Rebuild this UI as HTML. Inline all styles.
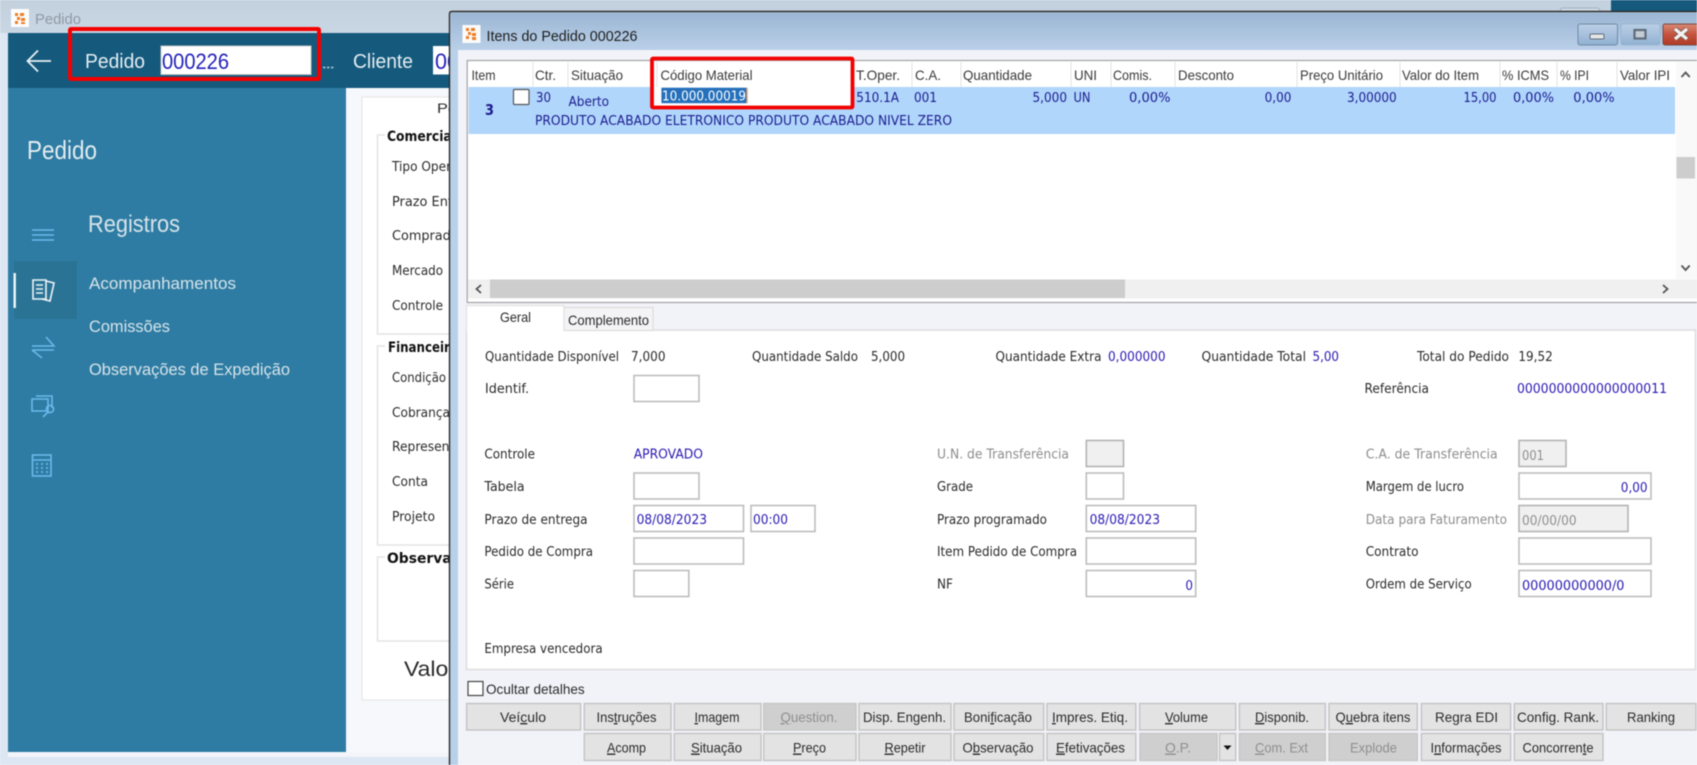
<!DOCTYPE html>
<html lang="pt-BR">
<head>
<meta charset="utf-8">
<title>Itens do Pedido 000226</title>
<style>
html,body{margin:0;padding:0;width:1697px;height:765px;overflow:hidden;background:#f3f5fa}
svg{display:block;filter:blur(.45px)}
text{font-family:"Liberation Sans",Arial,sans-serif;font-size:14px;fill:#2b2b2b}
.t text,text.n{font-family:"DejaVu Sans",sans-serif;font-size:13px}
.b{fill:#2a1ab5}
text.n{fill:#1c1c8e}
.g{fill:#8d8d8d}
.d{fill:#8f8f8f}
.h{fill:#3a3a3a}
.lg{font-family:"DejaVu Sans",sans-serif;font-weight:bold;font-size:14px;fill:#111}
.side{fill:#d6e3ea}
.inp{fill:#fff;stroke:#bdbdbd;stroke-width:1.6}
.dis{fill:#f0f0f0;stroke:#b4b4b4;stroke-width:1.6}
.btn{fill:#e3e3e3;stroke:#c4c4c4;stroke-width:1.4}
.btd{fill:#cfcfcf;stroke:#c6c6c6;stroke-width:1.4}
.ic{fill:none;stroke:#6ab8ea;stroke-width:1.6}
</style>
</head>
<body>
<svg xmlns="http://www.w3.org/2000/svg" width="1697" height="765" viewBox="0 0 1697 765">
<defs>
<linearGradient id="tb" x1="0" y1="0" x2="0" y2="1"><stop offset="0" stop-color="#9bb6d3"/><stop offset="1" stop-color="#bad0e9"/></linearGradient>
<linearGradient id="bt" x1="0" y1="0" x2="0" y2="1"><stop offset="0" stop-color="#b9cfe6"/><stop offset=".5" stop-color="#a8c1dd"/><stop offset="1" stop-color="#8fb0d2"/></linearGradient>
<linearGradient id="cl" x1="0" y1="0" x2="0" y2="1"><stop offset="0" stop-color="#d98a76"/><stop offset=".5" stop-color="#c4533e"/><stop offset="1" stop-color="#b03a26"/></linearGradient>
<linearGradient id="tl" x1="0" y1="0" x2="0" y2="1"><stop offset="0" stop-color="#c3d1de"/><stop offset="1" stop-color="#c9d6e3"/></linearGradient>
</defs>

<!-- background window -->
<rect x="0" y="0" width="1697" height="765" fill="#dce7f3"/>
<rect x="0" y="0" width="1697" height="33" fill="url(#tl)"/>
<rect x="11" y="9" width="18" height="18" fill="#fdfdfd"/>
<g fill="#ef7d22"><rect x="15" y="13" width="3" height="3"/><rect x="20" y="13" width="4" height="3"/><rect x="17" y="17" width="3" height="3"/><rect x="21" y="18" width="4" height="3"/><rect x="15" y="21" width="3" height="3"/><rect x="21" y="22" width="4" height="2"/></g>
<text x="35" y="24" style="font-size:15px;fill:#8e9aa6" textLength="46" lengthAdjust="spacingAndGlyphs">Pedido</text>

<rect x="8" y="33" width="442" height="55" fill="#155a7d"/>
<path d="M51 61H28M38 50.5L27.5 61 38 71.5" fill="none" stroke="#e8eff3" stroke-width="1.8"/>
<text x="85" y="68" style="font-size:20px;fill:#e4edf2" textLength="60" lengthAdjust="spacingAndGlyphs">Pedido</text>
<rect x="161" y="46" width="150" height="28.5" fill="#fff" stroke="#c9c9c9" stroke-width="1"/>
<text x="162" y="69" style="font-size:22px;fill:#2421b8" textLength="67" lengthAdjust="spacingAndGlyphs">000226</text>
<path d="M323 67.5H334" stroke="#b8cfdc" stroke-width="1.6" stroke-dasharray="2.4 1.6"/>
<text x="353" y="68" style="font-size:20px;fill:#e4edf2" textLength="60" lengthAdjust="spacingAndGlyphs">Cliente</text>
<rect x="433" y="46" width="20" height="28.5" fill="#fff"/>
<text x="435" y="69" style="font-size:22px;fill:#2421b8" textLength="24" lengthAdjust="spacingAndGlyphs">00</text>
<rect x="70" y="29" width="249" height="50" rx="1" fill="none" stroke="#f40000" stroke-width="4"/>

<!-- sidebar -->
<rect x="8" y="88" width="338" height="664" fill="#2e7ca3"/>
<text x="27" y="159" class="side" style="font-size:26px;fill:#e2ecf1" textLength="70" lengthAdjust="spacingAndGlyphs">Pedido</text>
<text x="88" y="232" class="side" style="font-size:24px" textLength="92" lengthAdjust="spacingAndGlyphs">Registros</text>
<text x="89" y="289" class="side" style="font-size:17px" textLength="147" lengthAdjust="spacingAndGlyphs">Acompanhamentos</text>
<text x="89" y="332" class="side" style="font-size:17px" textLength="81" lengthAdjust="spacingAndGlyphs">Comissões</text>
<text x="89" y="375" class="side" style="font-size:17px" textLength="201" lengthAdjust="spacingAndGlyphs">Observações de Expedição</text>
<path class="ic" d="M32 230H54M32 235H54M32 240H54"/>
<rect x="14" y="261" width="63" height="58" fill="#2a7395"/>
<rect x="13.5" y="273" width="2.4" height="35" fill="#f2f6f8"/>
<g fill="none" stroke="#eef3f6" stroke-width="1.6"><path d="M33 280H46V299H33ZM36 285H43M36 289H43M36 293H43"/><path d="M46 281L54 283 50 301 42 299" /></g>
<path class="ic" d="M32 346H54L46 337M32 350H54M32 350L42 358"/>
<path class="ic" d="M36 396H52V408M32 399H48V411H32ZM43 417L49 411"/>
<circle class="ic" cx="50" cy="409" r="3.6"/>
<rect class="ic" x="32.5" y="455" width="18.5" height="21"/>
<path class="ic" d="M33 460H51" />
<g fill="#62b0e2"><rect x="36" y="463" width="2" height="2"/><rect x="41" y="463" width="2" height="2"/><rect x="46" y="463" width="2" height="2"/><rect x="36" y="467" width="2" height="2"/><rect x="41" y="467" width="2" height="2"/><rect x="46" y="467" width="2" height="2"/><rect x="36" y="471" width="2" height="2"/><rect x="41" y="471" width="2" height="2"/><rect x="46" y="471" width="2" height="2"/></g>

<!-- content behind -->
<rect x="346" y="88" width="104" height="664" fill="#f7f8fc"/>
<rect x="8" y="752" width="442" height="5" fill="#f3f5fa"/>
<rect x="362" y="97" width="100" height="603" fill="#fff" stroke="#e4e4e4" stroke-width="1"/>
<text x="437" y="113" textLength="20" lengthAdjust="spacingAndGlyphs">Pe</text>
<g fill="none" stroke="#e5e5e5" stroke-width="1.6">
<path d="M385 135H377.5V334H460M385 346H377.5V545H460M385 557H377.5V641H460"/>
</g>
<text x="387" y="141" class="lg" textLength="69" lengthAdjust="spacingAndGlyphs">Comercial</text>
<text x="388" y="352" class="lg" textLength="70" lengthAdjust="spacingAndGlyphs">Financeiro</text>
<text x="387" y="563" class="lg" textLength="100" lengthAdjust="spacingAndGlyphs">Observações</text>
<g class="t">
<text x="392" y="171" textLength="88" lengthAdjust="spacingAndGlyphs">Tipo Operação</text>
<text x="392" y="206" textLength="90" lengthAdjust="spacingAndGlyphs">Prazo Entrega</text>
<text x="392" y="240" textLength="72" lengthAdjust="spacingAndGlyphs">Comprador</text>
<text x="392" y="275" textLength="51" lengthAdjust="spacingAndGlyphs">Mercado</text>
<text x="392" y="310" textLength="51" lengthAdjust="spacingAndGlyphs">Controle</text>
<text x="392" y="382" textLength="54" lengthAdjust="spacingAndGlyphs">Condição</text>
<text x="392" y="417" textLength="58" lengthAdjust="spacingAndGlyphs">Cobrança</text>
<text x="392" y="451" textLength="90" lengthAdjust="spacingAndGlyphs">Representante</text>
<text x="392" y="486" textLength="36" lengthAdjust="spacingAndGlyphs">Conta</text>
<text x="392" y="521" textLength="43" lengthAdjust="spacingAndGlyphs">Projeto</text>
</g>
<text x="404" y="676" style="font-size:21px" textLength="52" lengthAdjust="spacingAndGlyphs">Valor</text>

<!-- far background top-right -->
<rect x="1611" y="0" width="86" height="12" fill="#155a7d"/>
<rect x="1560.5" y="8" width="39" height="6" rx="2" fill="#d0dce7" stroke="#9fb0c0"/>

<!-- DIALOG -->
<rect x="449" y="11" width="1248" height="754" fill="#b9d0e9"/>
<path d="M449.5 765V14Q449.5 11.5 452 11.5H1697" fill="none" stroke="#2a2a2a" stroke-width="1.4"/>
<rect x="451" y="13" width="1246" height="37" fill="url(#tb)"/>
<rect x="458" y="50" width="1239" height="715" fill="#f2f3f9"/>
<rect x="462.5" y="25" width="18" height="18" fill="#fbfbfb"/>
<g fill="#ef7d22"><rect x="466" y="28" width="3" height="3"/><rect x="471" y="28" width="4" height="3"/><rect x="468" y="32" width="3" height="3"/><rect x="472" y="33" width="4" height="3"/><rect x="466" y="36" width="3" height="3"/><rect x="472" y="37" width="4" height="3"/></g>
<text x="486.5" y="41" style="font-size:14.5px;fill:#1e1e1e" textLength="151" lengthAdjust="spacingAndGlyphs">Itens do Pedido 000226</text>

<!-- caption buttons -->
<rect x="1578" y="24" width="39.5" height="21" rx="2" fill="url(#bt)" stroke="#6f8aa6"/>
<rect x="1590" y="34" width="14" height="5" rx="1" fill="#e6e6e6" stroke="#5e6c7b"/>
<rect x="1621" y="24" width="39" height="21" rx="2" fill="url(#bt)" stroke="#9db5cf"/>
<rect x="1634.5" y="30" width="11" height="8.5" fill="#c4ccd4" stroke="#5e6c7b" stroke-width="2.2"/>
<rect x="1663" y="24" width="36" height="21" rx="2" fill="url(#cl)" stroke="#7b4a42"/>
<path d="M1675 29L1687 39M1687 29L1675 39" stroke="#6d5a55" stroke-width="5"/>
<path d="M1675 29L1687 39M1687 29L1675 39" stroke="#f4f1ef" stroke-width="3.4"/>

<!-- list -->
<rect x="467.2" y="60.5" width="1231" height="242" fill="#fff" stroke="#a3a3a3" stroke-width="1.2"/>
<rect x="468.5" y="87" width="1206.5" height="47" fill="#b0d6fc"/>
<rect x="1676" y="62" width="21" height="217" fill="#f9f9f9"/>
<rect x="1676.5" y="157" width="18.5" height="21.5" fill="#cdcdcd"/>
<path d="M1681.5 77L1685.6 72.5 1689.7 77M1681.5 265.5L1685.6 270 1689.7 265.5" fill="none" stroke="#555" stroke-width="1.8"/>
<rect x="468" y="279.5" width="1229" height="19" fill="#f0f0f0"/>
<rect x="490" y="279.5" width="635" height="18.5" fill="#cdcdcd"/>
<path d="M481 285L476.5 289 481 293M1663 285L1667.5 289 1663 293" fill="none" stroke="#555" stroke-width="1.8"/>
<path fill="none" stroke="#e6e6e6" stroke-width="1.2" d="M533 62V87M568 62V87M657 62V87M854 62V87M912 62V87M961 62V87M1071 62V87M1111 62V87M1175 62V87M1297 62V87M1400 62V87M1500 62V87M1557 62V87M1617 62V87"/>
<g>
<text class="h" x="471.5" y="80" textLength="24" lengthAdjust="spacingAndGlyphs">Item</text>
<text class="h" x="535" y="80" textLength="21" lengthAdjust="spacingAndGlyphs">Ctr.</text>
<text class="h" x="571" y="80" textLength="52" lengthAdjust="spacingAndGlyphs">Situação</text>
<text class="h" x="660.5" y="80" textLength="92" lengthAdjust="spacingAndGlyphs">Código Material</text>
<text class="h" x="856" y="80" textLength="44" lengthAdjust="spacingAndGlyphs">T.Oper.</text>
<text class="h" x="915" y="80" textLength="26" lengthAdjust="spacingAndGlyphs">C.A.</text>
<text class="h" x="963" y="80" textLength="69" lengthAdjust="spacingAndGlyphs">Quantidade</text>
<text class="h" x="1074" y="80" textLength="23" lengthAdjust="spacingAndGlyphs">UNI</text>
<text class="h" x="1113" y="80" textLength="39" lengthAdjust="spacingAndGlyphs">Comis.</text>
<text class="h" x="1178" y="80" textLength="56" lengthAdjust="spacingAndGlyphs">Desconto</text>
<text class="h" x="1300" y="80" textLength="83" lengthAdjust="spacingAndGlyphs">Preço Unitário</text>
<text class="h" x="1402" y="80" textLength="77" lengthAdjust="spacingAndGlyphs">Valor do Item</text>
<text class="h" x="1502" y="80" textLength="47" lengthAdjust="spacingAndGlyphs">% ICMS</text>
<text class="h" x="1560" y="80" textLength="29" lengthAdjust="spacingAndGlyphs">% IPI</text>
<text class="h" x="1620" y="80" textLength="50" lengthAdjust="spacingAndGlyphs">Valor IPI</text>
</g>
<text class="n" x="485" y="115" style="font-size:15px;font-weight:bold" textLength="9" lengthAdjust="spacingAndGlyphs">3</text>
<rect x="513.5" y="89.5" width="15.5" height="15" rx="1" fill="#fff" stroke="#555" stroke-width="1.2"/>
<text class="n" x="536" y="102" textLength="15" lengthAdjust="spacingAndGlyphs">30</text>
<text class="n" x="568.5" y="106" textLength="40.5" lengthAdjust="spacingAndGlyphs">Aberto</text>
<rect x="652" y="87" width="200" height="20" fill="#fff"/>
<rect x="661.4" y="87.7" width="85" height="15.5" fill="#2470bb"/>
<rect x="746.5" y="87.7" width="1.2" height="15.5" fill="#ee9a55"/>
<text x="662" y="100.5" style="font-family:'DejaVu Sans',sans-serif;font-size:13px;fill:#fff" textLength="84" lengthAdjust="spacingAndGlyphs">10.000.00019</text>
<text class="n" x="856.3" y="102" textLength="42.7" lengthAdjust="spacingAndGlyphs">510.1A</text>
<text class="n" x="914" y="102" textLength="23" lengthAdjust="spacingAndGlyphs">001</text>
<text class="n" x="1032.5" y="102" textLength="34.5" lengthAdjust="spacingAndGlyphs">5,000</text>
<text class="n" x="1073.5" y="102" textLength="17" lengthAdjust="spacingAndGlyphs">UN</text>
<text class="n" x="1129" y="102" textLength="41.5" lengthAdjust="spacingAndGlyphs">0,00%</text>
<text class="n" x="1264.6" y="102" textLength="26.8" lengthAdjust="spacingAndGlyphs">0,00</text>
<text class="n" x="1347" y="102" textLength="49.7" lengthAdjust="spacingAndGlyphs">3,00000</text>
<text class="n" x="1463.5" y="102" textLength="33" lengthAdjust="spacingAndGlyphs">15,00</text>
<text class="n" x="1513" y="102" textLength="41" lengthAdjust="spacingAndGlyphs">0,00%</text>
<text class="n" x="1573.3" y="102" textLength="41.3" lengthAdjust="spacingAndGlyphs">0,00%</text>
<text class="n" x="535" y="125" textLength="417" lengthAdjust="spacingAndGlyphs">PRODUTO ACABADO ELETRONICO PRODUTO ACABADO NIVEL ZERO</text>
<rect x="652" y="58.5" width="200.5" height="49" rx="1" fill="none" stroke="#f40000" stroke-width="3.8"/>

<!-- tabs + panel -->
<rect x="466.5" y="330" width="1229" height="339.5" fill="#fff" stroke="#dedede" stroke-width="1.6"/>
<rect x="564" y="307.5" width="89" height="23" fill="#f4f4f6" stroke="#dcdcdc" stroke-width="1.2"/>
<rect x="466.5" y="305" width="97.5" height="27" fill="#fff"/>
<path d="M466.5 331V305.5H564V331" fill="none" stroke="#e2e2e2" stroke-width="1.2"/>
<text x="500" y="322" textLength="31" lengthAdjust="spacingAndGlyphs">Geral</text>
<text x="568" y="325" textLength="81" lengthAdjust="spacingAndGlyphs">Complemento</text>

<g class="t">
<!-- info row -->
<text x="485" y="361" textLength="134" lengthAdjust="spacingAndGlyphs">Quantidade Disponível</text>
<text x="631" y="361" textLength="34.5" lengthAdjust="spacingAndGlyphs">7,000</text>
<text x="752" y="361" textLength="106" lengthAdjust="spacingAndGlyphs">Quantidade Saldo</text>
<text x="871" y="361" textLength="34" lengthAdjust="spacingAndGlyphs">5,000</text>
<text x="995.5" y="361" textLength="106" lengthAdjust="spacingAndGlyphs">Quantidade Extra</text>
<text class="b" x="1108" y="361" textLength="57.5" lengthAdjust="spacingAndGlyphs">0,000000</text>
<text x="1201.5" y="361" textLength="104.5" lengthAdjust="spacingAndGlyphs">Quantidade Total</text>
<text class="b" x="1312.5" y="361" textLength="26.5" lengthAdjust="spacingAndGlyphs">5,00</text>
<text x="1417" y="361" textLength="92" lengthAdjust="spacingAndGlyphs">Total do Pedido</text>
<text x="1518.4" y="361" textLength="34.3" lengthAdjust="spacingAndGlyphs">19,52</text>

<text x="485" y="393" textLength="44" lengthAdjust="spacingAndGlyphs">Identif.</text>
<rect class="inp" x="634" y="375.5" width="65" height="26"/>
<text x="1364.5" y="393" textLength="64.5" lengthAdjust="spacingAndGlyphs">Referência</text>
<text class="b" x="1517" y="393" textLength="150" lengthAdjust="spacingAndGlyphs">0000000000000000011</text>

<!-- col 1 -->
<text x="484.4" y="458.5" textLength="50.6" lengthAdjust="spacingAndGlyphs">Controle</text>
<text class="b" x="633.7" y="458.5" textLength="69.3" lengthAdjust="spacingAndGlyphs">APROVADO</text>
<text x="484.4" y="491" textLength="40.2" lengthAdjust="spacingAndGlyphs">Tabela</text>
<rect class="inp" x="634" y="473" width="65" height="26"/>
<text x="484.4" y="524" textLength="103.2" lengthAdjust="spacingAndGlyphs">Prazo de entrega</text>
<rect class="inp" x="634" y="505.5" width="109.5" height="26"/>
<text class="b" x="636.6" y="524" textLength="70.4" lengthAdjust="spacingAndGlyphs">08/08/2023</text>
<rect class="inp" x="751" y="505.5" width="64" height="26"/>
<text class="b" x="753" y="524" textLength="35" lengthAdjust="spacingAndGlyphs">00:00</text>
<text x="484.4" y="556" textLength="108.6" lengthAdjust="spacingAndGlyphs">Pedido de Compra</text>
<rect class="inp" x="634" y="538" width="109.5" height="26"/>
<text x="484.4" y="588.5" textLength="29.6" lengthAdjust="spacingAndGlyphs">Série</text>
<rect class="inp" x="634" y="570.5" width="54.8" height="26"/>
<text x="484.4" y="653" textLength="118.2" lengthAdjust="spacingAndGlyphs">Empresa vencedora</text>

<!-- col 2 -->
<text class="g" x="937" y="458.5" textLength="132" lengthAdjust="spacingAndGlyphs">U.N. de Transferência</text>
<rect class="dis" x="1086.3" y="440.5" width="37.2" height="26"/>
<text x="937" y="491" textLength="36" lengthAdjust="spacingAndGlyphs">Grade</text>
<rect class="inp" x="1086.3" y="473" width="37.2" height="26"/>
<text x="937" y="524" textLength="110" lengthAdjust="spacingAndGlyphs">Prazo programado</text>
<rect class="inp" x="1086.3" y="505.5" width="109.4" height="26"/>
<text class="b" x="1089.6" y="524" textLength="70.4" lengthAdjust="spacingAndGlyphs">08/08/2023</text>
<text x="937" y="556" textLength="140" lengthAdjust="spacingAndGlyphs">Item Pedido de Compra</text>
<rect class="inp" x="1086.3" y="538" width="109.4" height="26"/>
<text x="937" y="588.5" textLength="16" lengthAdjust="spacingAndGlyphs">NF</text>
<rect class="inp" x="1086.3" y="570.5" width="109.4" height="26"/>
<text class="b" x="1185.4" y="590" textLength="7.6" lengthAdjust="spacingAndGlyphs">0</text>

<!-- col 3 -->
<text class="g" x="1365.7" y="458.5" textLength="132" lengthAdjust="spacingAndGlyphs">C.A. de Transferência</text>
<rect class="dis" x="1519" y="440.5" width="47" height="26"/>
<text class="d" x="1522" y="460" textLength="22" lengthAdjust="spacingAndGlyphs">001</text>
<text x="1365.7" y="491" textLength="98.3" lengthAdjust="spacingAndGlyphs">Margem de lucro</text>
<rect class="inp" x="1519" y="473" width="132" height="26"/>
<text class="b" x="1620.8" y="492" textLength="26.8" lengthAdjust="spacingAndGlyphs">0,00</text>
<text class="g" x="1365.7" y="524" textLength="141.3" lengthAdjust="spacingAndGlyphs">Data para Faturamento</text>
<rect class="dis" x="1519" y="505.5" width="109" height="26"/>
<text class="d" x="1522" y="525" textLength="54.6" lengthAdjust="spacingAndGlyphs">00/00/00</text>
<text x="1365.7" y="556" textLength="52.8" lengthAdjust="spacingAndGlyphs">Contrato</text>
<rect class="inp" x="1519" y="538" width="132" height="26"/>
<text x="1365.7" y="588.5" textLength="106" lengthAdjust="spacingAndGlyphs">Ordem de Serviço</text>
<rect class="inp" x="1519" y="570.5" width="132" height="26"/>
<text class="b" x="1522" y="590" textLength="102.5" lengthAdjust="spacingAndGlyphs">00000000000/0</text>
</g>

<!-- bottom -->
<rect x="468" y="681.5" width="15" height="14" fill="#fff" stroke="#444" stroke-width="1.2"/>
<text x="486" y="694" textLength="98.7" lengthAdjust="spacingAndGlyphs">Ocultar detalhes</text>

<g>
<rect class="btn" x="466.6" y="703.5" width="114" height="26.5"/>
<rect class="btn" x="584.3" y="703.5" width="86.7" height="26.5"/>
<rect class="btn" x="674.3" y="703.5" width="86.7" height="26.5"/>
<rect class="btd" x="763.8" y="703.5" width="92.2" height="26.5"/>
<rect class="btn" x="859" y="703.5" width="92" height="26.5"/>
<rect class="btn" x="954" y="703.5" width="89.7" height="26.5"/>
<rect class="btn" x="1047" y="703.5" width="88.8" height="26.5"/>
<rect class="btn" x="1139.6" y="703.5" width="96.1" height="26.5"/>
<rect class="btn" x="1239.4" y="703.5" width="85.9" height="26.5"/>
<rect class="btn" x="1329" y="703.5" width="88.3" height="26.5"/>
<rect class="btn" x="1421.4" y="703.5" width="89.2" height="26.5"/>
<rect class="btn" x="1514.3" y="703.5" width="88.7" height="26.5"/>
<rect class="btn" x="1606.3" y="703.5" width="89.7" height="26.5"/>

<rect class="btn" x="584.3" y="733.5" width="86.7" height="27"/>
<rect class="btn" x="674.3" y="733.5" width="86.7" height="27"/>
<rect class="btn" x="763.8" y="733.5" width="92.2" height="27"/>
<rect class="btn" x="859" y="733.5" width="92" height="27"/>
<rect class="btn" x="954" y="733.5" width="89.7" height="27"/>
<rect class="btn" x="1047" y="733.5" width="88.8" height="27"/>
<rect class="btd" x="1140" y="733.5" width="77" height="27"/>
<rect class="btn" x="1219.6" y="733.5" width="16.1" height="27"/>
<path d="M1223.5 745.5H1231.5L1227.5 750Z" fill="#111"/>
<rect class="btd" x="1239.4" y="733.5" width="85.9" height="27"/>
<rect class="btd" x="1329" y="733.5" width="88.3" height="27"/>
<rect class="btn" x="1421.4" y="733.5" width="89.2" height="27"/>
<rect class="btn" x="1514.3" y="733.5" width="88.7" height="27"/>
</g>
<g>
<text x="500" y="722" textLength="46" lengthAdjust="spacingAndGlyphs">Veí<tspan text-decoration="underline">c</tspan>ulo</text>
<text x="596.5" y="722" textLength="60" lengthAdjust="spacingAndGlyphs">Ins<tspan text-decoration="underline">t</tspan>ruções</text>
<text x="694.5" y="722" textLength="45" lengthAdjust="spacingAndGlyphs"><tspan text-decoration="underline">I</tspan>magem</text>
<text class="d" x="780.5" y="722" textLength="57" lengthAdjust="spacingAndGlyphs"><tspan text-decoration="underline">Q</tspan>uestion.</text>
<text x="863" y="722" textLength="83" lengthAdjust="spacingAndGlyphs">Disp. Engenh.</text>
<text x="964" y="722" textLength="68" lengthAdjust="spacingAndGlyphs">Boni<tspan text-decoration="underline">f</tspan>icação</text>
<text x="1052" y="722" textLength="76" lengthAdjust="spacingAndGlyphs"><tspan text-decoration="underline">I</tspan>mpres. Etiq.</text>
<text x="1165" y="722" textLength="43" lengthAdjust="spacingAndGlyphs"><tspan text-decoration="underline">V</tspan>olume</text>
<text x="1255" y="722" textLength="54" lengthAdjust="spacingAndGlyphs"><tspan text-decoration="underline">D</tspan>isponib.</text>
<text x="1335.5" y="722" textLength="75" lengthAdjust="spacingAndGlyphs">Q<tspan text-decoration="underline">u</tspan>ebra itens</text>
<text x="1435" y="722" textLength="63" lengthAdjust="spacingAndGlyphs">Re<tspan text-decoration="underline">g</tspan>ra EDI</text>
<text x="1517" y="722" textLength="82" lengthAdjust="spacingAndGlyphs">Config. Rank.</text>
<text x="1627" y="722" textLength="48" lengthAdjust="spacingAndGlyphs">Ranking</text>

<text x="607" y="752.5" textLength="39" lengthAdjust="spacingAndGlyphs"><tspan text-decoration="underline">A</tspan>comp</text>
<text x="691" y="752.5" textLength="51" lengthAdjust="spacingAndGlyphs"><tspan text-decoration="underline">S</tspan>ituação</text>
<text x="793" y="752.5" textLength="33" lengthAdjust="spacingAndGlyphs"><tspan text-decoration="underline">P</tspan>reço</text>
<text x="884.5" y="752.5" textLength="41" lengthAdjust="spacingAndGlyphs"><tspan text-decoration="underline">R</tspan>epetir</text>
<text x="962.5" y="752.5" textLength="71" lengthAdjust="spacingAndGlyphs">O<tspan text-decoration="underline">b</tspan>servação</text>
<text x="1056" y="752.5" textLength="69" lengthAdjust="spacingAndGlyphs"><tspan text-decoration="underline">E</tspan>fetivações</text>
<text class="d" x="1165" y="752.5" textLength="26" lengthAdjust="spacingAndGlyphs"><tspan text-decoration="underline">O</tspan>.P.</text>
<text class="d" x="1255" y="752.5" textLength="53" lengthAdjust="spacingAndGlyphs"><tspan text-decoration="underline">C</tspan>om. Ext</text>
<text class="d" x="1350" y="752.5" textLength="47" lengthAdjust="spacingAndGlyphs">Explode</text>
<text x="1430.5" y="752.5" textLength="71" lengthAdjust="spacingAndGlyphs">I<tspan text-decoration="underline">n</tspan>formações</text>
<text x="1522.5" y="752.5" textLength="71" lengthAdjust="spacingAndGlyphs">Concorren<tspan text-decoration="underline">t</tspan>e</text>
</g>
</svg>
</body>
</html>
